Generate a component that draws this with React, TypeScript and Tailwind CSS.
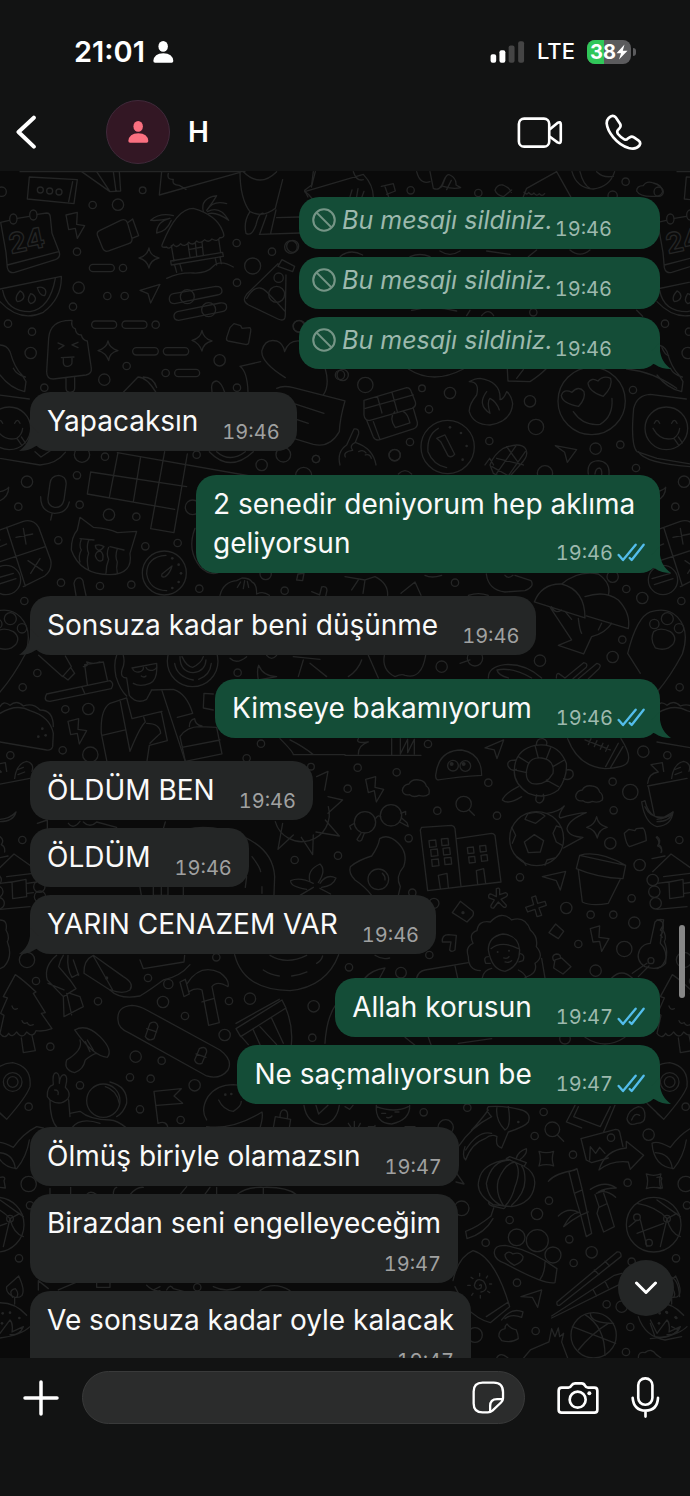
import React from 'react';

type Message = {
    id: number;
    text: string;
    time: string;
    mine: boolean;
    deleted?: boolean;
    tail?: boolean;
    stacked?: boolean;
};

const messages: Message[] = [
    { id: 1, text: 'Bu mesajı sildiniz.', time: '19:46', mine: true, deleted: true },
    { id: 2, text: 'Bu mesajı sildiniz.', time: '19:46', mine: true, deleted: true },
    { id: 3, text: 'Bu mesajı sildiniz.', time: '19:46', mine: true, deleted: true, tail: true },
    { id: 4, text: 'Yapacaksın', time: '19:46', mine: false, tail: true },
    { id: 5, text: '2 senedir deniyorum hep aklıma geliyorsun', time: '19:46', mine: true, tail: true },
    { id: 6, text: 'Sonsuza kadar beni düşünme', time: '19:46', mine: false, tail: true },
    { id: 7, text: 'Kimseye bakamıyorum', time: '19:46', mine: true, tail: true },
    { id: 8, text: 'ÖLDÜM BEN', time: '19:46', mine: false },
    { id: 9, text: 'ÖLDÜM', time: '19:46', mine: false },
    { id: 10, text: 'YARIN CENAZEM VAR', time: '19:46', mine: false, tail: true },
    { id: 11, text: 'Allah korusun', time: '19:47', mine: true },
    { id: 12, text: 'Ne saçmalıyorsun be', time: '19:47', mine: true, tail: true },
    { id: 13, text: 'Ölmüş biriyle olamazsın', time: '19:47', mine: false },
    { id: 14, text: 'Birazdan seni engelleyeceğim', time: '19:47', mine: false, stacked: true },
    { id: 15, text: 'Ve sonsuza kadar oyle kalacak', time: '19:47', mine: false, stacked: true },
];

/* ---------- wallpaper ---------- */

type Patch = {
    x: number;
    y: number;
    paths: string[];
    circles: number[][];
    dots?: number[][];
};

// Each patch is drawn at three times its size and scaled down, x/y is its corner
const leftPatches: Patch[] = [
    {
        x: 0,
        y: 165,
        paths: [
            'M60 20H735',
            'M88 36L232 44L222 116L82 102ZM218 50L206 110',
            'M245 20L330 80L362 78L358 20M290 20L330 80M340 20L348 78',
            'M485 20L478 90L720 22M505 25q-5 20 15 18q-5 18 18 18l20 12',
            'M2 172L28 166M52 160L88 154M112 148L140 144Q150 144 151 156L156 205L178 262Q182 278 166 284L44 322Q26 326 22 308L18 262L2 172M22 300L176 260',
            'M29 162a11 15 0 1 0 22 0a11 15 0 1 0-22 0M89 150a11 15 0 1 0 22 0a11 15 0 1 0-22 0',
            'M198 150L232 142L230 178L254 182L232 220L226 190L206 194Z',
            'M300 196L362 166Q376 160 382 172L396 220Q398 232 386 236L326 258Q314 262 308 250L292 210Q290 200 300 196M382 174L398 162L416 212L396 220',
            'M488 235Q480 250 500 246Q508 256 520 238q10 14 22-2q12 12 24-4q12 12 24-4q12 10 24-4q12 10 22-2q16 10 24-4q18 2 8-20Q650 150 580 130Q530 130 488 235M514 242L522 288M656 222L662 262M512 288L668 262L670 274L514 300ZM524 300L530 322M540 298L546 318M646 280L650 300M660 276L664 296M564 236L570 276M586 232L590 272M606 230L610 270M566 254L606 246M500 340Q540 322 580 324T640 304T700 306',
            'M610 140Q600 100 650 92Q640 110 620 136Q640 104 680 116M622 140Q660 120 686 166Q650 140 626 146M520 152Q480 142 452 166Q480 168 510 160Q470 170 470 204Q500 200 514 166',
            'M447 249Q451 273 477 279Q451 285 447 309Q441 285 417 279Q441 273 447 249Z',
            'M324 528Q328 550 354 557Q328 563 326 587Q318 563 294 557Q320 550 324 528Z',
            'M606 496Q610 520 636 528Q610 534 606 558Q598 534 576 526Q602 520 606 496Z',
            'M420 376L480 358L452 414L444 386Z',
            'M279 298H332a11 11 0 0 1 0 22H279a11 11 0 0 1 0-22ZM286 468H339a11 11 0 0 1 0 22H286a11 11 0 0 1 0-22ZM377 468H430a11 11 0 0 1 0 22H377a11 11 0 0 1 0-22ZM409 548H464a11 11 0 0 1 0 22H409a11 11 0 0 1 0-22ZM501 548H555a11 11 0 0 1 0 22H501a11 11 0 0 1 0-22ZM535 613H588a11 11 0 0 1 0 22H535a11 11 0 0 1 0-22Z',
            'M520 386L648 364q18 0 18 14q0 10-14 12L524 416q-16 0-16-14q0-14 12-16M532 440L660 414q20-2 20 12q0 12-14 14L536 466q-14 0-14-12q0-10 10-14',
            'M834 296L740 388Q724 408 746 420L834 462Q856 472 856 450L858 330M846 284L884 304L878 320L834 304ZM740 400Q770 350 800 380T856 440',
            'M0 372L184 334Q186 400 130 442Q60 474 0 410M8 376Q20 440 90 440Q150 430 166 340M60 378q-18 20-8 32q18-2 20-16q-2-12-12-16M92 386q-14 22 0 30q16-4 14-18q-4-10-14-12M112 368q8 26 22 24q8-14-2-22q-10-6-20-2',
            'M140 620L146 520Q150 464 216 466Q212 486 226 492Q228 510 244 510Q248 526 262 528L274 610Q276 626 258 630L160 642Q140 642 140 620M198 640V670Q198 682 210 682Q224 682 224 670V636M174 534L192 542L176 552M234 532L216 540L234 548M184 578L222 576M190 578V594Q192 606 204 604Q216 602 216 592V578',
            'M690 488L702 476L722 482L726 490L750 488Q754 492 752 500L746 534Q744 540 736 538L684 528Q678 526 680 518Z',
            'M0 540Q20 540 30 560Q44 610 66 630L78 650L74 680Q30 670 0 630M40 610Q50 630 76 636',
            'M370 682L414 636Q440 636 468 682M430 636Q460 636 470 668',
            'M856 638Q780 590 786 556Q796 520 830 528Q850 536 854 560Q866 524 900 528M720 604L782 590M720 604Q742 620 744 680M976 612Q990 660 970 690',
            'M636 680Q630 650 650 648Q664 652 674 682',
            'M-8 775q8-18 16 0M44 775q8-18 16 0M-12 790Q10 830 50 820Q66 810 68 790M52 822l14 20M64 816l12 18M-70 730Q-60 690-20 688L88 702M-70 730Q-80 840-60 860L0 880L120 900Q170 896 196 862M105 860l18 16 30-20',
            'M830 670Q850 660 880 668L1035 708Q1020 760 1018 800Q990 850 940 838L880 820M880 715L972 745M880 760L925 775',
            'M720 20Q720 100 750 140Q790 160 826 130L848 44M750 140Q730 170 738 205Q756 215 768 180Q778 140 790 145M778 208L900 204M800 150L780 205M828 135L812 205M830 158L900 156M730 20Q780 70 830 20M940 20L935 60L914 76L924 96',
        ],
        circles: [[121, 75, 9], [149, 78, 9], [177, 81, 9], [278, 120, 11], [354, 119, 17], [428, 76, 10], [231, 260, 11], [369, 309, 11], [236, 368, 17], [322, 393, 11], [374, 393, 11], [219, 425, 11], [24, 476, 11], [96, 500, 11], [92, 564, 17], [467, 479, 11], [380, 603, 11], [313, 644, 17], [133, 668, 11], [710, 234, 11], [816, 260, 11], [873, 246, 19], [758, 303, 24], [711, 353, 11], [659, 586, 17], [497, 624, 11], [711, 668, 11], [5, 80, 14], [898, 484, 18], [1020, 630, 14], [562, 395, 21], [626, 434, 21], [830, 388, 24], [836, 338, 14], [28, 790, 64]],
    },
    {
        x: 0,
        y: 450,
        paths: [
            'M628 5Q690 70 760 5M650 5Q690 40 736 5',
            'M352 8L820 90M354 8L328 142M272 66L262 132L524 178M272 66L560 110M422 20L400 156M494 5L452 236L522 248L562 12',
            'M150 100Q152 78 176 76Q202 80 198 106L192 150Q186 174 164 172Q142 168 144 144ZM122 140Q122 186 164 190Q200 190 208 156M156 192L152 210',
            'M0 125Q20 120 26 112Q26 140 0 152',
            'M0 240L70 214Q100 206 116 232L152 330Q158 360 134 378L70 410M20 232L76 408M0 335L136 290M48 262L98 252M70 235L78 282M84 332L128 362M120 326L92 370M0 290L20 282M-15 386L40 370M-8 404L48 386M-62 290L0 270',
            'M240 202L280 232Q330 236 352 248L410 244L390 310Q400 372 330 374Q240 374 214 300Q214 260 232 240ZM240 266L282 270M330 290L372 300M244 268q-8 20 0 32q-10 18-4 36M266 270q-8 24 0 40q-8 20 0 50M326 292q-8 20 0 36q-8 20-8 42M352 296q-8 24 0 40q-4 16 0 34M286 286q14-4 26 4q-10 14-18 10q-8-4-8-14M286 318q2-16 16-14q10 8 6 26q-14 10-22-12',
            'M498 316Q440 320 440 372Q448 420 500 422M486 372L516 348Q510 370 496 380Q482 384 486 372',
            'M228 436L222 400Q226 382 240 384Q250 388 250 400L258 436',
            'M585 235Q560 300 600 350Q630 380 660 366',
            'M660 436Q670 396 710 392L726 384Q750 384 756 396Q770 400 770 432q20-10 38 4M712 412l10-16M730 416l4-24M746 412l-4-18M890 390l4-18 18-2-4 22zM935 425l24 10 6-24q16-4 16 10l-4 18',
            'M-10 545Q10 530 40 545Q60 560 50 580Q30 606-5 594Q-22 570-10 545M-88 610Q-60 500-20 486Q30 470 60 500Q100 540 76 612Q40 680 0 726M-88 610L-50 670',
            'M116 616L188 680L214 650L196 618M188 678L204 690L224 670L212 652',
            'M254 644L310 636L322 690M254 644L262 704M250 650q20-4 10-14q20 8 40 0M140 732L330 692Q344 700 334 716L150 754Q128 754 140 732M246 712l8 18',
            'M350 616Q340 640 348 680Q360 720 380 738M370 616Q376 640 366 660Q360 684 380 684L388 736Q410 764 440 748L454 722M470 640Q474 690 450 700Q420 712 400 700M396 654L470 640M398 656a16 12 0 1 0 32-4M438 652a16 12 0 1 0 32-6M424 678q8 6 14 0M304 850Q300 780 330 760L380 744L396 806L486 784M454 720L520 718Q560 730 578 790L532 802M304 850L322 940M306 856L376 840M360 750L390 904Q420 830 436 816L430 798M484 786L502 872L448 886L440 940M440 820Q480 820 482 850Q470 860 450 880M486 722L556 935',
            'M540 860Q560 830 600 830L650 832L666 912L556 934L540 860M546 892L660 870M568 830Q568 810 584 806Q586 826 606 828',
            'M524 640Q530 680 580 690M596 688Q630 676 634 640M540 620Q540 665 580 668Q616 664 618 630M546 620Q560 650 578 652Q604 640 610 620',
            'M0 790Q50 760 90 782Q150 800 160 850L158 890Q154 902 140 900L0 876M0 770q10-20 30-4q20-18 40 2q30-10 50 12q40 0 40 50',
            'M204 814L236 806L234 838L260 842L238 882L232 850L212 854Z',
            'M640 732L612 730L610 774L640 780M775 690Q770 660 776 646Q790 680 830 680ZM690 625q20 20 50-5M800 616q15 18 30 0M880 620L960 628M910 630L895 680M930 640L980 680',
            'M840 866q40 40 40 48H1035M870 870q40 20 70 44',
        ],
        circles: [[246, 14, 23], [315, 20, 11], [81, 95, 17], [231, 76, 11], [55, 170, 11], [327, 194, 17], [239, 164, 11], [409, 200, 11], [590, 14, 11], [785, 45, 17], [850, 14, 22], [948, 27, 11], [175, 271, 11], [436, 289, 11], [533, 279, 11], [183, 398, 11], [300, 408, 11], [394, 404, 11], [598, 416, 11], [73, 453, 11], [112, 669, 11], [68, 712, 11], [196, 778, 11], [265, 777, 17], [188, 901, 11], [31, 916, 11], [271, 914, 23], [713, 668, 11], [783, 881, 11], [854, 422, 11], [797, 372, 17], [740, 925, 11], [578, 172, 22], [933, 950, 10], [911, 76, 24], [18, 390, 44], [493, 369, 66], [31, 506, 18], [66, 535, 14], [-8, 522, 14], [578, 634, 76]],
        dots: [[517, 325, 4], [536, 344, 4], [543, 370, 4], [536, 396, 4], [517, 414, 4], [127, 836, 4], [137, 856, 4], [115, 860, 4]],
    },
    {
        x: 0,
        y: 750,
        paths: [
            'M950 80L984 64L974 120M984 140L1028 150L984 190M976 210L1018 258L948 246M940 255L938 314L904 262M880 255L834 298L848 220M985 170A80 80 0 0 1 826 215',
            'M560 238Q640 220 730 260Q820 300 824 380L822 436M600 240Q700 250 740 380L736 412M756 320Q780 350 782 365M786 410v20',
            'M940 400Q900 380 872 392Q870 410 920 418M930 395Q920 360 960 342Q980 360 955 398M960 400Q980 370 1008 384Q1000 408 965 412M900 436L940 412M960 415L992 432',
            'M-13 365L42 312L110 360M-15 326L24 318M20 380L100 370M0 400L34 396M36 396L78 388L80 440L38 446ZM80 400L110 396M0 478L90 470M82 430L100 428',
            'M0 260q14 10 4 24q12 6 10 22M0 510Q24 510 18 540Q30 560 22 575Q40 620 12 650L0 656',
            'M-28 100Q-26 70 4 66L-18 44L16 38L20 64M44 85Q50 40 80 34Q104 40 96 64M50 60l20-8M54 74l20-8M-28 108L90 85M-26 110L-8 196M0 215Q40 215 48 186Q30 206 0 208',
            'M112 220l30-10v26M205 220Q220 240 240 214M250 216q20 20 40 0l60 16M490 236l6-20M420 412l4 24M460 412v24h44v-24M484 412v24M550 412v24',
            'M46 674L10 740L22 744L2 790L12 796L0 850Q14 870 26 850Q36 866 50 846Q66 870 80 846Q100 866 108 842Q130 846 156 836L124 790L136 788L100 730L108 726Q70 690 46 674M64 864L70 908L106 902L96 856M36 768q4 14 16 8M66 812q4 12 16 6q4 12 18 6',
            'M170 616Q130 650 142 690L190 740L228 716L210 690L176 650Q180 630 190 616M190 740L192 800L250 770L240 740L210 730M200 730L215 795M144 700l48 20M204 616q-4 40 12 66l20-10M220 630l16 46',
            'M252 670Q250 630 280 616L370 680Q404 700 390 720Q370 734 330 720L252 670M280 618L338 720',
            'M330 720Q360 750 420 738Q450 720 490 690Q540 680 570 644M420 630L430 656L552 636L554 616',
            'M540 696L556 688L568 732L552 740ZM562 700Q600 640 660 668Q690 690 684 710Q650 690 636 710L658 818L626 826L606 720Q590 712 568 724M606 756l34-10',
            'M354 810Q350 770 396 766Q420 768 440 780L660 900Q700 930 684 960Q660 990 620 978L390 850Q354 836 354 810M436 860L450 820Q470 810 474 830L462 866Q446 876 436 860M440 836l30 10M584 930L598 896Q620 886 620 906L606 940Q590 946 584 930M588 912l30 10',
            'M224 840Q260 820 300 860Q340 900 322 922Q280 920 224 840M240 870Q250 900 200 930Q190 960 224 968Q250 960 256 930Q280 910 290 910M256 875l14 30M262 870l18 30',
            'M708 836L846 750L858 774L722 860ZM724 860L745 884M858 776Q880 830 874 884M760 840L780 884M780 830L830 884M815 805L850 880M708 820L838 748',
            'M704 614Q730 720 870 722Q980 710 1016 614M790 660q20 14 48 18M875 678q24-2 46-12M950 640q14-8 18-22M810 616q50 30 110 0M975 880Q980 800 1010 760',
        ],
        circles: [[67, 270, 11], [81, 630, 23], [108, 693, 11], [294, 754, 11], [444, 684, 11], [489, 756, 17], [555, 798, 11], [649, 622, 11], [687, 753, 11], [750, 746, 17], [674, 855, 17], [941, 769, 17], [937, 863, 11], [151, 890, 11], [407, 920, 17], [485, 932, 11], [884, 330, 11], [1014, 317, 11], [505, 702, 14], [-13, 390, 17], [-8, 425, 17], [-4, 460, 17], [120, 440, 17], [118, 410, 17]],
        dots: [[320, 684, 5]],
    },
    {
        x: 0,
        y: 1060,
        paths: [
            'M-40 60Q-10 10 38 8Q96 20 90 80Q80 110 20 178L-30 130M0 160l16 14',
            'M142 110Q140 80 160 74Q156 40 168 38Q180 40 178 70M178 70Q180 46 192 44Q206 48 196 82Q214 100 204 116Q180 140 150 120L142 110M150 120Q150 180 172 204M206 120L210 170M164 90q14 0 10 14',
            'M316 80Q350 90 358 130M210 160L240 154Q270 180 330 180Q350 180 380 204M215 204Q240 170 300 190M330 66Q384 80 380 130Q370 160 350 170',
            'M462 94L544 86L522 108L548 130L470 136M462 94L474 190Q500 180 504 204',
            'M620 180Q600 150 624 110Q650 74 700 74L720 76M620 200Q700 210 786 156Q790 170 780 204M656 120Q670 150 700 154Q724 140 724 124',
            'M820 204L826 170L872 178L868 204M840 172Q840 148 854 150Q866 152 862 176M912 136Q920 190 970 194Q1010 186 1018 136M948 136l8 26 28-26',
            'M-15 250Q0 240 40 262Q70 220 110 200L130 204M-15 250Q-10 320 50 326Q80 290 88 240M-5 278Q40 280 46 326',
            'M-60 430Q0 440 30 476L10 560M0 420L70 470M30 476L60 460M-60 520L20 490M30 476Q40 520 70 530M-50 480L-30 560M-84 500L-60 480',
            'M44 712Q16 700 20 680L56 648Q76 690 66 706Q60 714 44 712M38 712Q24 690 46 686Q58 700 50 712M-20 730Q40 720 80 766M44 714v18M-20 836Q60 830 90 800M-20 780L0 820L30 780Q40 790 36 816L70 800Q60 826 30 824M0 352q20-4 12 10l4 22-16-2',
            'M150 385v20M212 382v22M260 404q10-14 30 0M340 404q0-20 10-22M390 404q20-24 40-22M560 380l-20 24M630 382l-16 22M650 382v22M710 404Q740 380 790 382Q860 380 890 404M790 382v22',
            'M115 690v-28l30 24M175 690l60-26M290 660v22h40v-18M440 676q20 20 40 16M460 690l20-10M500 690q10-20 20-4l30 8M640 680q40 20 80 0M780 692q40-30 90 0',
        ],
        circles: [[38, 66, 28], [38, 66, 16], [86, 140, 11], [240, 76, 11], [390, 52, 11], [420, 148, 11], [452, 56, 11], [584, 76, 17], [542, 180, 11], [86, 372, 23], [57, 595, 11], [90, 436, 11], [592, 682, 11], [310, 122, 50], [-10, 494, 82], [30, 476, 10], [-60, 472, 10], [-24, 548, 10]],
        dots: [[30, 758, 4], [58, 774, 4], [8, 760, 4], [6, 790, 4], [676, 104, 4], [694, 102, 4]],
    },
];

const rightPatches: Patch[] = [
    {
        x: 290,
        y: 165,
        paths: [
            'M64 66L76 20M44 80L220 28M44 80Q60 90 66 100M220 28Q250 60 250 96M190 20q10 30 30 24M180 95l6-20M200 95l4-24M216 95l6-16',
            'M274 64L310 56L316 78L290 88M284 62L296 96',
            'M380 20Q390 60 420 50M420 20L430 70Q450 80 460 50Q470 24 480 30Q500 40 498 60L512 68Q490 74 460 64M455 66l12-30M470 74l14-28',
            'M615 76q6-18 24-16q20 8 25 22M615 76Q620 90 640 95M640 95L665 75',
            'M700 95L710 70L800 20L842 95M702 82q10 10 14 0q8 12 16 2q8 12 16 2q8 10 16 0',
            'M846 20Q860 70 910 72Q960 66 974 20M870 20Q880 60 900 70M920 20Q940 40 970 34',
            'M1040 78Q1040 62 1060 62Q1070 46 1090 54Q1116 60 1118 80Q1112 96 1092 94Q1050 96 1040 78',
            'M150 275Q180 250 218 270M450 258q30 20 60 0M590 258L660 268M740 255L715 275M840 255Q870 280 900 255M360 275Q390 262 420 275',
            'M355 612Q430 660 520 612M365 436Q430 420 500 438M540 436L530 452M575 452q20-24 36 0M1040 436l18 18',
            'M222 706L350 668Q360 668 364 680L376 710Q380 724 366 730L240 766Q224 768 222 750ZM262 694L276 744M306 682L322 740M226 730L370 690M230 766L250 816Q256 828 270 824L370 792Q384 786 382 772L370 730M314 740Q296 760 316 788L360 774Q352 744 340 740M250 770l20 54',
            'M538 650Q570 650 560 690Q536 720 538 740Q550 780 600 780Q664 770 668 716Q664 690 650 680Q640 704 630 704Q634 650 570 640Q556 640 538 650M590 680Q560 720 600 745Q590 710 600 700Q620 710 628 735',
            'M652 612L654 648L720 650Q750 630 768 612M680 640l20-26',
            'M866 724Q818 716 814 692Q820 670 846 682Q866 660 882 680Q888 700 866 724M940 694Q896 680 894 654Q904 636 924 648Q940 630 962 640Q970 664 940 694M850 740Q880 784 930 778Q970 756 966 700',
            'M1010 612Q1090 620 1160 670M1116 548q8 20 20 24',
            'M445 790Q410 810 414 860Q430 900 470 908M440 820L465 810L494 868Q484 880 474 872L452 830Z',
            'M150 900Q140 860 170 840L192 792Q208 790 206 806L196 832Q250 850 258 900M196 832q-20 10-8 24q-30 4-22 20M206 860q14-8 22 4M226 870q14-4 18 10',
            'M600 900Q610 870 640 850Q690 830 706 850Q720 870 690 900L650 945L610 925ZM620 880L700 900M650 845L690 900M680 840L620 925M606 905L660 935M706 860L650 940M585 900l14-20 12 20',
            'M796 842L860 854L832 892L824 862Z',
        ],
        circles: [[362, 76, 11], [565, 84, 11], [1007, 50, 11], [968, 92, 14], [8, 244, 18], [730, 442, 11], [26, 484, 17], [158, 630, 17], [226, 660, 23], [396, 670, 10], [480, 684, 17], [417, 733, 11], [720, 709, 17], [738, 786, 23], [598, 828, 11], [360, 831, 11], [314, 870, 17], [78, 882, 11], [917, 851, 17], [1029, 675, 11], [991, 839, 11], [905, 708, 101], [473, 846, 80]],
        dots: [[480, 787, 4], [513, 804, 4], [530, 843, 4], [518, 884, 4]],
    },
    {
        x: 345,
        y: 450,
        paths: [
            'M730 72Q724 34 760 32Q796 36 792 74M750 72Q752 54 764 54Q772 58 770 74M880 5Q900 40 1035 50',
            'M424 372Q430 420 480 426L540 422Q570 410 558 392L510 376M480 376q10 12 24 0M160 72q20-20 40 0',
            'M0 380L60 390L90 380Q130 400 128 436M40 390l-20 30M60 390l-6 40M168 430L210 396L228 436M370 436q30-10 60 0M240 376q20 10 50 0',
            'M568 456Q590 400 650 402Q720 420 720 504ZM720 440Q780 420 820 450Q858 490 850 536L724 498M614 470L680 570L640 586L716 612L740 560Q780 550 800 520M700 505Q704 540 710 550M650 402Q700 360 760 372Q800 400 790 436M620 470q10 24 30 10M660 484l20 24M770 520l-10 20',
            'M118 616Q110 660 150 680Q170 670 180 676Q230 690 242 616M70 616L100 684M10 680Q40 660 50 630M345 640l30-10',
            'M430 684Q430 650 480 644Q540 640 590 684M456 660Q500 650 560 684M456 660Q460 676 490 684',
            'M634 684q0-20 12-10l14 10M660 684L716 638Q730 640 724 652L684 686M700 686L756 640Q772 644 762 656L730 686',
            'M668 866Q700 950 780 956Q850 952 850 930Q856 910 828 866M782 950L820 880M796 954L834 890M720 870L796 900M738 866l-8 18M756 872l-8 18M774 880l-8 18M790 886l-8 18',
            'M508 960Q510 900 570 886Q640 876 664 940Q668 980 640 1020Q600 1050 550 1030Q505 1000 508 960M545 960Q550 920 590 924Q630 930 624 970Q600 1010 560 1000Q540 990 545 960M570 886L580 924M618 890L604 926M520 920L552 940M508 960L545 968M658 930L624 950M640 1010L604 990M574 886q0-22 20-20q16 6 10 20M512 930q-30 0-22 20q10 16 24 8M664 960q24-4 20 18q-10 16-28 8M520 1010Q480 1030 472 1050Q490 1066 530 1040M575 1035q-8 24 10 24q16-8 10-26',
            'M272 976Q280 900 350 900Q410 910 410 976Q340 980 280 990Q272 990 272 976',
            'M0 916H228M140 866V914M40 866q-10 16 30 10q-30 10-30 36M166 866v46l22-44v40l20-40v44M420 894L476 870L456 926L448 900Z',
        ],
        circles: [[149, 16, 17], [600, 70, 23], [873, 54, 11], [330, 398, 11], [803, 380, 17], [844, 417, 11], [892, 444, 17], [832, 569, 11], [585, 632, 17], [803, 621, 17], [290, 650, 17], [390, 625, 23], [249, 882, 11], [38, 953, 11], [155, 967, 11], [895, 905, 17], [324, 947, 16], [361, 948, 16]],
        dots: [[320, 942, 6], [356, 942, 6]],
    },
    {
        x: 345,
        y: 750,
        paths: [
            'M62 88L92 80L90 112L116 118L94 156L88 122L70 128Z',
            'M736 536L764 528L762 562L792 566L770 604L764 574L744 576Z',
            'M172 122Q174 104 192 102Q200 86 222 90Q240 92 244 108Q256 116 252 132Q240 142 222 136Q206 144 194 134Q176 138 172 122',
            'M692 140Q694 122 712 120Q720 104 742 108Q760 110 764 126Q776 134 772 150Q760 160 742 154Q726 162 714 152Q696 156 692 140',
            'M372 180L388 196M92 205Q98 194 107 200M28 220l-14 8l4 10M48 250l-12 18q6 10 14 2l8-20M168 190l14-6v10M164 216l26 14-4-12-16-14',
            'M80 436Q60 410 30 390Q10 370 16 350Q40 330 80 318Q100 290 104 266Q130 250 160 280Q190 310 176 350Q150 380 166 410L160 436M112 370q10 10 8 20',
            'M248 422L226 240L230 232L320 226Q328 228 330 236L348 410M248 422L468 396L450 256Q446 250 440 250L334 266M286 416L280 376L306 370L310 412M398 402L394 362L416 356L422 400',
            'M252 272l20-2 2 20-20 2zM289 267l20-2 2 20-20 2zM257 299l20-2 2 20-20 2zM294 295l20-2 2 20-20 2zM260 329l20-2 2 20-20 2zM298 324l20-2 2 20-20 2zM367 293l18-2 2 18-18 2zM404 288l18-2 2 18-18 2zM371 321l18-2 2 18-18 2zM408 316l18-2 2 18-18 2z',
            'M538 276L568 254L596 272L586 306L550 308ZM540 208L548 192Q580 180 600 198L572 220ZM500 232L512 256L502 280M634 228L624 250L634 276L652 286M515 320l20 14l8 12M600 346l6-16 24-6M634 228L648 232',
            'M606 190Q640 186 658 168Q636 200 646 204Q690 190 724 188Q670 210 666 236Q670 260 714 262Q680 280 656 294',
            'M755 200Q759 226 787 232Q761 238 757 264Q751 238 725 232Q749 226 755 200Z',
            'M838 250L852 238L870 242L874 236L894 234Q902 240 904 272L854 290Q844 286 838 250Z',
            'M704 316L842 346L834 386Q760 384 694 356ZM704 316Q760 300 842 346M700 360L712 456Q740 470 790 460L826 388',
            'M890 156L900 152Q910 200 950 206L984 186Q980 226 936 230Q900 220 890 156M900 170Q920 215 980 196',
            'M454 416q8-4 10 2v16l18-6q10 4 2 12l-16 8 16 18q0 10-10 4l-14-14-14 18q-10 2-8-8l10-16-16-6q-4-12 6-12l16 8z',
            'M560 442l12-4 6 22 22-6 4 12-22 8 8 22-14 4-6-22-22 8-6-14 24-8z',
            'M592 380L662 364L646 420L634 392Z',
            'M346 454L384 484Q388 494 380 502L366 516L322 488ZM632 522L656 544L640 566L612 548ZM630 630l20-6 28 26-24 22-28-18zM626 632q-8-16 8-20q14 0 12 12',
            'M292 576Q290 554 310 554L334 556L330 600Q320 608 314 600L318 576Z',
            'M406 662Q370 660 370 620Q360 590 384 580Q370 550 396 542Q400 510 436 516Q470 480 500 510Q540 496 556 540Q580 560 574 590Q600 620 570 640Q580 670 540 682M430 600Q430 560 474 552Q520 556 524 600Q524 650 480 664Q440 660 430 600M438 596Q470 570 520 596M430 620q-16 0-8 20l14 0M524 610q18 4 10 22l-12 4M476 624q12 4 16-4M480 636q10 4 20-4M412 684Q416 660 440 655M520 660q20 10 24 24',
            'M215 684Q220 664 240 660L370 638M330 648l8 36M590 625L600 684M60 684Q80 660 120 654L104 684M90 616q20 14 44 8',
            'M930 516Q940 504 956 510L946 580Q968 600 962 640Q940 664 900 650Q870 630 884 600Q896 580 916 580ZM952 530l-6 10 8 6-8 10 6 6M862 670L906 640M880 680L912 648M800 684Q830 654 862 684',
            'M934 262q14 14 4 26q16 6 10 20M250 862L258 884M340 880L440 866M180 862l30 24M720 862q60 40 120 0',
        ],
        circles: [[8, 116, 11], [430, 98, 11], [803, 95, 11], [856, 126, 23], [806, 181, 11], [456, 197, 11], [277, 182, 11], [191, 265, 11], [796, 280, 17], [525, 382, 11], [884, 345, 17], [860, 445, 11], [664, 474, 17], [737, 494, 11], [805, 494, 11], [868, 518, 17], [700, 582, 11], [838, 597, 23], [752, 662, 17], [202, 428, 11], [267, 460, 15], [253, 615, 11], [168, 668, 16], [12, 652, 11], [660, 866, 16], [356, 162, 23], [60, 217, 32], [138, 196, 32], [100, 388, 31], [575, 266, 81], [918, 632, 9]],
        dots: [[354, 488, 5], [458, 606, 3], [492, 602, 3]],
    },
    {
        x: 345,
        y: 1060,
        paths: [
            'M94 136Q90 190 140 192Q196 180 194 136M94 140Q150 160 190 140M110 160h12M150 156h12M125 172q10 4 16-4M70 200h20v-4M180 200h30v4M10 190l8 12M28 184l0 16M46 190l-6 12M0 140l14 8 10-12',
            'M340 260Q380 200 440 170Q420 150 430 140Q480 136 530 150Q560 160 550 186Q540 200 490 216L470 264Q450 260 456 230Q440 220 420 236Q380 250 362 300Q350 290 360 260M430 150Q400 190 380 210M456 140Q450 180 480 210Q500 200 490 140M440 220Q400 210 362 270',
            'M638 226l18 18M690 136L664 186L710 204M776 216L810 136M700 140L686 170L766 200L796 140M708 236L812 208Q822 208 824 216L834 260M708 236L724 300L740 308L790 294M734 300L736 260L752 280L764 262L780 280',
            'M762 330Q780 270 844 264L844 244L896 286L856 328L850 306Q800 300 762 330',
            'M846 176Q850 150 880 140Q900 140 900 168Q900 190 876 190Q850 200 846 176M860 180q8-24 24-14',
            'M582 274Q604 282 626 274Q618 296 626 318Q604 310 582 318Q590 296 582 274ZM904 342Q926 350 948 342Q940 364 948 386Q926 378 904 386Q912 364 904 342Z',
            'M490 298L536 318Q576 340 568 380Q560 430 500 440L444 434Q390 400 402 360Q410 310 490 298M470 436Q430 420 424 370Q440 300 496 300M476 438Q450 400 460 360Q480 310 510 306Q530 330 510 380Q500 420 480 438M500 436Q540 400 540 360Q540 330 530 318M484 296l10-6 50 18-6 10M432 424q-4 10 10 14l34 8q8-4 4-8M514 294q6-20 30-28q4 14-18 32M446 444L438 468Q400 500 362 514L366 536Q420 520 444 476',
            'M672 336L696 326L712 390L740 520L724 530L706 460L688 400ZM688 400L712 390M706 466L730 456M610 364Q630 340 690 330M754 400L778 392M750 404L762 440L756 460L776 516L808 500L790 440L776 400M762 442L784 432M736 388Q780 360 814 384Q780 384 760 396Q790 390 812 412M640 468Q670 440 702 458Q680 456 656 500Q680 480 706 466',
            'M448 580Q446 556 480 556Q560 570 636 626L630 668Q600 676 480 610Q450 600 448 580M600 606Q600 640 584 660M508 616Q480 600 480 584Q490 570 504 582Q524 574 534 590Q536 606 508 616',
            'M324 662Q340 590 384 572Q450 590 494 740L436 788Q400 780 360 740L330 680M490 726L424 770M470 780Q500 740 534 756L530 772Q500 760 480 776M404 676q8-6 4 8q-16 10-20-8q6-26 28-12q18 26-8 32M404 640v8M428 648l-4 6M440 672h-6M434 698l-6-4M406 714v-8M380 706l4-6M368 676h8M378 652l6 4',
            'M636 726L816 576Q830 574 828 590L644 736Q634 738 636 726M620 768L808 646L830 640M620 774L830 670M748 630l14 14M780 604l14 14M745 690l10 18M780 664l10 20',
            'M528 710L590 690L578 742L562 712ZM335 340l22 32-24-6',
            'M462 830Q460 810 480 806Q480 796 486 792Q496 806 514 810Q520 824 520 836Q500 850 470 842Z',
            'M682 800L812 850M720 764Q780 800 780 886M700 870Q740 820 790 790M736 760q0 30 70 30',
            'M536 894L556 870L612 846L620 806L630 830L640 804L644 830L656 820L650 846L668 894M455 894q10-20 34 0M880 894q0-20 20-16q20-16 34 6l14 10',
            'M880 770Q900 830 960 840L1010 830M916 790L930 830Q970 840 1000 810L980 800M970 650q30 0 34 60',
        ],
        circles: [[236, 157, 11], [367, 143, 11], [596, 156, 11], [569, 228, 11], [911, 224, 17], [684, 284, 11], [848, 368, 11], [612, 422, 11], [576, 462, 17], [494, 480, 11], [422, 548, 11], [673, 538, 11], [740, 577, 17], [686, 609, 11], [516, 668, 11], [860, 605, 11], [785, 733, 11], [572, 813, 11], [856, 801, 11], [830, 740, 17], [390, 825, 22], [843, 876, 11], [350, 445, 22], [302, 202, 23], [515, 532, 25], [577, 542, 33], [624, 585, 24], [622, 208, 22], [798, 233, 11], [746, 826, 68]],
        dots: [[520, 186, 4], [964, 756, 4], [992, 772, 4]],
    },
];

const DoodlePatch: React.FC<{ patch: Patch }> = ({ patch }) => (
    <g transform={`translate(${patch.x} ${patch.y}) scale(0.3333)`}>
        {patch.paths.map((d, i) => (
            <path key={i} d={d} />
        ))}
        {patch.circles.map(([cx, cy, r], i) => (
            <circle key={i} cx={cx} cy={cy} r={r} />
        ))}
        {patch.dots?.map(([cx, cy, r], i) => (
            <circle key={i} cx={cx} cy={cy} r={r} fill="#242525" stroke="none" />
        ))}
    </g>
);

const Wallpaper: React.FC = () => (
    <svg
        className="absolute inset-0 h-full w-full"
        viewBox="0 171 690 1187"
        preserveAspectRatio="xMidYMin slice"
        fill="none"
        stroke="#242525"
        strokeWidth={4}
        strokeLinecap="round"
        strokeLinejoin="round"
        aria-hidden="true"
    >
        <g id="tile">
            {leftPatches.map((patch) => (
                <DoodlePatch key={patch.y} patch={patch} />
            ))}
            <text
                x="11"
                y="254"
                transform="rotate(-12 11 254)"
                fontFamily="Inter, sans-serif"
                fontSize="28"
                fontWeight="700"
                strokeWidth="1.300"
            >
                24
            </text>
        </g>
        <use href="#tile" x="657" />
        {rightPatches.map((patch) => (
            <DoodlePatch key={`${patch.x}-${patch.y}`} patch={patch} />
        ))}
    </svg>
);

/* ---------- icons ---------- */

const PersonIcon: React.FC<{ className: string }> = ({ className }) => (
    <svg className={className} viewBox="464 62 62 65" fill="currentColor" aria-hidden="true">
        <ellipse cx="494" cy="78" rx="14" ry="16" />
        <path d="M465 121Q467 98 494.500 98Q522 98 524 121Q524 126 519 126H470Q465 126 465 121Z" />
    </svg>
);

const Tail: React.FC<{ mine: boolean }> = ({ mine }) => (
    <svg
        className={
            mine
                ? 'absolute bottom-0 -right-[11px] h-[26px] w-5 text-[#144d37]'
                : 'absolute bottom-0 -left-[11px] h-[26px] w-5 -scale-x-100 text-[#242626]'
        }
        viewBox="0 0 20 26"
        fill="currentColor"
        aria-hidden="true"
    >
        <path d="M0 8L9 0V8C10 15 13 21 20 26C14 26 8 24.500 4 21.500L0 20Z" />
    </svg>
);

const ReadTicks: React.FC = () => (
    <svg className="mb-0.5 h-[19px] w-7" viewBox="816 276 84 57" fill="none" stroke="#53bdeb" strokeWidth={7} strokeLinecap="round" strokeLinejoin="round" role="img" aria-label="Okundu">
        <path d="M821 312L834 327L872 281M854 321L860 327L896 281" />
    </svg>
);

/* ---------- messages ---------- */

const DeletedBubble: React.FC<{ message: Message }> = ({ message }) => (
    <div className="relative flex h-[52px] items-start rounded-[20px] bg-[#144d37] pr-12 pl-[13px] text-[#9db9ae]">
        <svg className="mt-[11px] size-6 text-[#759586]" viewBox="0 0 23 23" fill="none" stroke="currentColor" strokeWidth={2} aria-hidden="true">
            <circle cx="11.500" cy="11.500" r="10.300" />
            <path d="M4.200 4.200L18.800 18.800" />
        </svg>
        <p className="ml-1.5 pt-[6px] text-[25px] leading-[34px] italic">{message.text}</p>
        <time className="ml-0.5 pt-[18px] text-[20px] leading-[28px] tabular-nums">{message.time}</time>
        {message.tail && <Tail mine />}
    </div>
);

const Bubble: React.FC<{ message: Message }> = ({ message }) => {
    const { text, time, mine, tail, stacked } = message;

    if (stacked) {
        return (
            <div className="relative flex flex-col rounded-[20px] bg-[#242626] px-[17px] pt-2.5 pb-[5px]">
                <p className="text-[28px] leading-[39px] text-[#fafafa]">{text}</p>
                <time className="mt-[7px] self-end text-[20px] leading-[28px] text-[#a0a1a1] tabular-nums">{time}</time>
            </div>
        );
    }

    return (
        <div
            className={
                mine
                    ? 'relative flow-root max-w-[464px] rounded-[20px] bg-[#144d37] pt-2.5 pr-[15px] pb-1.5 pl-[17px]'
                    : 'relative flow-root max-w-[82%] rounded-[20px] bg-[#242626] px-[17px] pt-2.5 pb-[5px]'
            }
        >
            <p className="text-[28px] leading-[39px] text-[#fafafa]">
                {text}
                <span
                    className={
                        mine
                            ? 'float-right mt-[15px] ml-6 flex items-center gap-1 text-[20px] leading-[28px] text-[#9db9ae]'
                            : 'float-right mt-4 ml-6 text-[20px] leading-[28px] text-[#a0a1a1]'
                    }
                >
                    <time className="tabular-nums">{time}</time>
                    {mine && <ReadTicks />}
                </span>
            </p>
            {tail && <Tail mine={mine} />}
        </div>
    );
};

const rowSpacing = (index: number) => {
    if (index === 0) return '';
    const current = messages[index];
    if (messages[index - 1].mine === current.mine) return 'mt-2';
    return current.mine ? 'mt-6' : 'mt-[23px]';
};

/* ---------- page ---------- */

const StatusBar: React.FC = () => (
    <div className="flex h-[100px] items-center pt-[3px] pr-[54px] pl-[74px] text-white">
        <span className="text-[29px] font-semibold">21:01</span>
        <PersonIcon className="ml-2 h-[22px] w-[21px]" />
        <svg className="ml-auto h-[22px] w-[35px]" viewBox="440 60 105 67" aria-hidden="true">
            <rect x="441" y="100" width="17" height="26" rx="6" fill="#fff" />
            <rect x="468" y="88" width="18" height="38" rx="6" fill="#fff" />
            <rect x="496" y="74" width="18" height="52" rx="6" fill="#454545" />
            <rect x="525" y="61" width="18" height="65" rx="6" fill="#454545" />
        </svg>
        <span className="ml-3 text-[22px] font-medium">LTE</span>
        <div className="relative ml-3 flex h-6 w-11 items-center justify-center overflow-hidden rounded-[8px] bg-[#5b5b5d]">
            <div className="absolute inset-y-0 left-0 w-[38%] bg-[#30c759]" />
            <span className="relative text-[20px] leading-6 font-bold">38</span>
            <svg className="relative h-4 w-3" viewBox="0 0 12 16" fill="currentColor" aria-hidden="true">
                <path d="M8.500 0.500L0.500 9.300H5L3 15.500L11.500 6.700H6.800Z" />
            </svg>
        </div>
        <div className="ml-0.5 h-2 w-[3px] rounded-r-full bg-[#5b5b5d]" />
    </div>
);

const ChatHeader: React.FC = () => (
    <header className="relative z-10 shrink-0 bg-[#121313] pb-[7px]">
        <StatusBar />
        <div className="flex h-16 items-center pr-12 pl-4 text-white">
            <button type="button" aria-label="Geri" className="w-[21px]">
                <svg className="h-[34px] w-[21px]" viewBox="48 286 62 102" fill="none" stroke="currentColor" strokeWidth={12} strokeLinecap="round" strokeLinejoin="round">
                    <path d="M101 294L55 337L101 381" />
                </svg>
            </button>
            <div className="ml-[69px] flex size-16 items-center justify-center rounded-full border border-[#40293a] bg-[#331724] text-[#fa7080]">
                <PersonIcon className="h-[22px] w-[21px]" />
            </div>
            <h1 className="ml-[18px] text-[28px] font-semibold">H</h1>
            <button type="button" aria-label="Görüntülü ara" className="ml-auto">
                <svg className="h-[31px] w-[46px]" viewBox="514 286 138 94" fill="none" stroke="currentColor" strokeWidth={8} strokeLinejoin="round">
                    <rect x="519" y="291" width="92" height="85" rx="16" />
                    <path d="M612 324L636 304Q646 298 646 308V358Q646 368 636 363L612 345" />
                </svg>
            </button>
            <button type="button" aria-label="Sesli ara" className="ml-[42px]">
                <svg className="size-[37px]" viewBox="779 278 111 111" fill="none" stroke="currentColor" strokeWidth={8} strokeLinejoin="round">
                    <path d="M790 290Q802 278 812 289L824 307Q828 314 823 320L817 327Q814 332 818 338Q826 348 837 354Q843 357 847 352L853 348Q859 344 866 348L880 358Q888 364 882 373Q872 386 850 380Q824 372 804 348Q786 326 784 306Q784 296 790 290Z" />
                </svg>
            </button>
        </div>
    </header>
);

const Composer: React.FC = () => (
    <footer className="relative z-10 flex shrink-0 items-center bg-[#121313] pt-[13px] pr-[30px] pb-[72px] pl-[23px] text-white">
        <button type="button" aria-label="Ekle">
            <svg className="size-9" viewBox="0 0 36 36" fill="none" stroke="currentColor" strokeWidth={3.5} strokeLinecap="round">
                <path d="M18 2V34M2 18H34" />
            </svg>
        </button>
        <div className="ml-[23px] flex h-[53px] min-w-0 flex-1 items-center rounded-full border border-[#393a3a] bg-[#2b2c2c] pr-[19px] pl-6">
            <input type="text" aria-label="Mesaj" className="h-full min-w-0 flex-1 bg-transparent text-[28px] outline-none" />
            <button type="button" aria-label="Çıkartmalar">
                <svg className="size-[33px]" viewBox="380 124 100 100" fill="none" stroke="currentColor" strokeWidth={7} strokeLinejoin="round">
                    <path d="M412 129H446Q474 129 474 158V176Q474 183 468 189L442 214Q436 219 428 219H412Q385 219 385 192V156Q385 129 412 129ZM435 217V200Q435 179 456 179H473" />
                </svg>
            </button>
        </div>
        <button type="button" aria-label="Kamera" className="ml-8">
            <svg className="h-[34px] w-[42px]" viewBox="636 122 126 102" fill="none" stroke="currentColor" strokeWidth={8} strokeLinejoin="round">
                <path d="M650 142H670Q676 142 679 136Q683 129 690 129H710Q717 129 720 136Q723 142 729 142H748Q757 142 757 151V208Q757 217 748 217H650Q641 217 641 208V151Q641 142 650 142Z" />
                <circle cx="698" cy="178" r="24" />
                <circle cx="733" cy="159" r="6" fill="currentColor" stroke="none" />
            </svg>
        </button>
        <button type="button" aria-label="Ses kaydet" className="ml-8">
            <svg className="h-[41px] w-[29px]" viewBox="860 107 88 124" fill="none" stroke="currentColor" strokeWidth={8} strokeLinecap="round">
                <rect x="882" y="111" width="43" height="80" rx="21" />
                <path d="M865 170Q868 208 904 209Q940 208 942 170M904 209V227" />
            </svg>
        </button>
    </footer>
);

const App: React.FC = () => (
    <div className="flex h-screen flex-col overflow-hidden bg-[#0a0a0a] font-['Inter',sans-serif]">
        <ChatHeader />
        <main className="relative min-h-0 flex-1 overflow-hidden">
            <Wallpaper />
            <ul className="relative px-[30px] pt-[26px]">
                {messages.map((message, index) => (
                    <li key={message.id} className={`flex ${message.mine ? 'justify-end' : 'justify-start'} ${rowSpacing(index)}`}>
                        {message.deleted ? <DeletedBubble message={message} /> : <Bubble message={message} />}
                    </li>
                ))}
            </ul>
            <div className="absolute right-[5px] bottom-[360px] h-[73px] w-1.5 rounded-full bg-[#868686]" />
            <button
                type="button"
                aria-label="En alta in"
                className="absolute right-4 bottom-[42px] flex size-14 items-center justify-center rounded-full bg-[#242626] text-white"
            >
                <svg className="h-3.5 w-6" viewBox="0 0 24 14" fill="none" stroke="currentColor" strokeWidth={3} strokeLinecap="round" strokeLinejoin="round">
                    <path d="M2.500 2L12 11.500L21.500 2" />
                </svg>
            </button>
        </main>
        <Composer />
    </div>
);

export default App;
